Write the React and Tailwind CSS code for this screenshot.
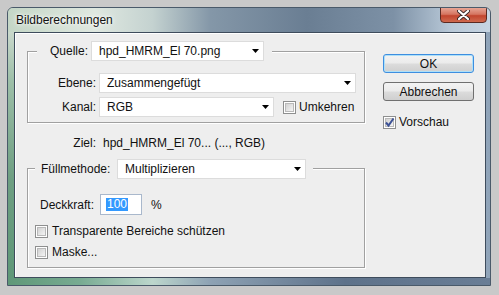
import React from 'react';

const font = "font-['Liberation_Sans',Arial,sans-serif]";

function Arrow() {
  return (
    <svg width="7" height="4" viewBox="0 0 7 4" className="shrink-0">
      <polygon points="0,0 7,0 3.5,4" fill="#000" />
    </svg>
  );
}

function Select({ value, width }) {
  return (
    <div
      className="h-[20px] shrink-0 flex items-center justify-between bg-white border border-[#dcdcdc] pl-[7px] pr-[4px]"
      style={{ width }}
    >
      <span className="leading-none">{value}</span>
      <Arrow />
    </div>
  );
}

function Checkbox({ checked }) {
  return (
    <span className="w-[13px] h-[13px] shrink-0 border border-[#8e8f8f] bg-white p-[1px] flex">
      <span className="relative flex-1 border border-[#b9b9b9] bg-[linear-gradient(135deg,#d2d2d2,#f4f4f4)]">
        {checked && (
          <svg width="11" height="11" viewBox="0 0 11 11" className="absolute -left-[2px] -top-[2px]">
            <path d="M2 5.5 L4.5 8.5 L9.5 1.5" fill="none" stroke="#3d5296" strokeWidth="2" />
          </svg>
        )}
      </span>
    </span>
  );
}

function Button({ children, focused }) {
  return (
    <div
      className={`h-[19px] w-[91px] rounded-[3px] border flex items-center justify-center bg-[linear-gradient(180deg,#f3f3f3_0%,#ebebeb_48%,#dcdcdc_52%,#cfcfcf_100%)] ${
        focused ? 'border-[#3d8ee0] shadow-[inset_0_0_0_1px_#aee0f8]' : 'border-[#707070]'
      }`}
    >
      {children}
    </div>
  );
}

const groupBox = 'border border-[#a0a0a0] shadow-[1px_1px_0_#fff,inset_1px_1px_0_#fff]';

export default function App() {
  return (
    <div className={`w-[499px] h-[295px] bg-[#c9c9c9] pt-[7px] pl-[7px] ${font} text-[12px] text-[#111]`}>
      {/* window frame */}
      <div className="w-[484px] h-[279px] rounded-t-[6px] border border-[#4a5a6a] bg-[linear-gradient(90deg,#b8ccbc_0%,#dbe6dc_18%,#c4d2d0_30%,#8497a8_42%,#6a7e93_62%,#7d91a6_80%,#9fb2c4_92%,#8fa3b8_100%)] flex flex-col overflow-hidden">
        {/* title bar */}
        <div className="h-[24px] shrink-0 flex items-start justify-between pl-[8px] pr-[3px] bg-[linear-gradient(90deg,#c4d6c6_0%,#dfe8e0_18%,#c4d2d0_30%,#8497a8_42%,#6a7e93_62%,#7d91a6_80%,#b9c9d8_92%,#c7d5e2_100%)]">
          <span className="mt-[5px] leading-[14px] [text-shadow:0_0_6px_#fff,0_0_3px_#fff]">Bildberechnungen</span>
          <div className="w-[47px] h-[16px] -mt-[1px] rounded-b-[4px] border border-[#5b2a22] bg-[linear-gradient(180deg,#e7a595_0%,#d57560_45%,#c2452e_55%,#cf6a4f_100%)] flex items-center justify-center">
            <svg width="13" height="10" viewBox="0 0 13 10">
              <path d="M2 1 L11 9 M11 1 L2 9" stroke="#3a2a2a" strokeWidth="4" strokeLinecap="round" />
              <path d="M2 1 L11 9 M11 1 L2 9" stroke="#fff" strokeWidth="2.2" strokeLinecap="round" />
            </svg>
          </div>
        </div>

        {/* body row: left frame, client */}
        <div className="h-[246px] shrink-0 flex">
          <div className="w-[6px] shrink-0 bg-[linear-gradient(180deg,#c9d8cb_0%,#9dbfa8_20%,#6e9f82_60%,#5f9878_100%)]" />

          {/* client area */}
          <div className="w-[472px] h-[246px] border border-[#3e4c5c] bg-[#eeeeee] shadow-[inset_1px_1px_0_#fff] flex items-start pl-[12px]">
            {/* left column */}
            <div className="w-[338px] mt-[18px] flex flex-col">
              {/* Quelle group */}
              <div className={`${groupBox} pb-[5px] flex flex-col`}>
                <div className="-mt-[11px] ml-[9px] w-[235px] h-[20px] bg-[#eeeeee] flex items-center">
                  <span className="w-[54px] text-right pr-[3px]">Quelle:</span>
                  <Select value="hpd_HMRM_El 70.png" width={173} />
                </div>
                <div className="mt-[12px] flex items-center">
                  <span className="w-[71px] text-right pr-[3px]">Ebene:</span>
                  <Select value="Zusammengefügt" width={257} />
                </div>
                <div className="mt-[4px] flex items-center">
                  <span className="w-[71px] text-right pr-[3px]">Kanal:</span>
                  <Select value="RGB" width={175} />
                  <span className="ml-[9px] mr-[3px]">
                    <Checkbox />
                  </span>
                  <span>Umkehren</span>
                </div>
              </div>

              {/* Ziel */}
              <div className="mt-[13px] h-[14px] flex items-center">
                <span className="w-[72px] text-right pr-[3px]">Ziel:</span>
                <span className="ml-[4px]">hpd_HMRM_El 70... (..., RGB)</span>
              </div>

              {/* Füllmethode group */}
              <div className={`${groupBox} mt-[18px] w-[338px] pb-[8px] flex flex-col`}>
                <div className="-mt-[10px] ml-[7px] w-[278px] h-[20px] bg-[#eeeeee] flex items-center">
                  <span className="w-[82px] pl-[6px]">Füllmethode:</span>
                  <Select value="Multiplizieren" width={189} />
                </div>
                <div className="mt-[15px] pl-[12px] flex items-center">
                  <span className="w-[60px]">Deckkraft:</span>
                  <div className="w-[42px] h-[21px] border border-[#a9b8cc] bg-white flex items-center pl-[5px]">
                    <span className="bg-[#3399ff] text-white leading-[13px] px-[1px]">100</span>
                  </div>
                  <span className="ml-[9px]">%</span>
                </div>
                <div className="mt-[10px] pl-[7px] flex items-center gap-[4px]">
                  <Checkbox />
                  <span className="leading-[13px]">Transparente Bereiche schützen</span>
                </div>
                <div className="mt-[8px] pl-[7px] flex items-center gap-[4px]">
                  <Checkbox />
                  <span className="leading-[13px]">Maske...</span>
                </div>
              </div>
            </div>

            {/* right column */}
            <div className="ml-[18px] mt-[21px] w-[91px] flex flex-col">
              <Button focused>OK</Button>
              <div className="mt-[9px]">
                <Button>Abbrechen</Button>
              </div>
              <div className="mt-[15px] flex items-center gap-[3px]">
                <Checkbox checked />
                <span className="leading-[13px]">Vorschau</span>
              </div>
            </div>
          </div>
        </div>

        {/* bottom frame */}
        <div className="flex-1 bg-[linear-gradient(90deg,#5f9878_0%,#78ab92_15%,#bcd6cc_30%,#8ea2b4_42%,#5e728a_70%,#6a7e96_100%)]" />
      </div>
    </div>
  );
}
